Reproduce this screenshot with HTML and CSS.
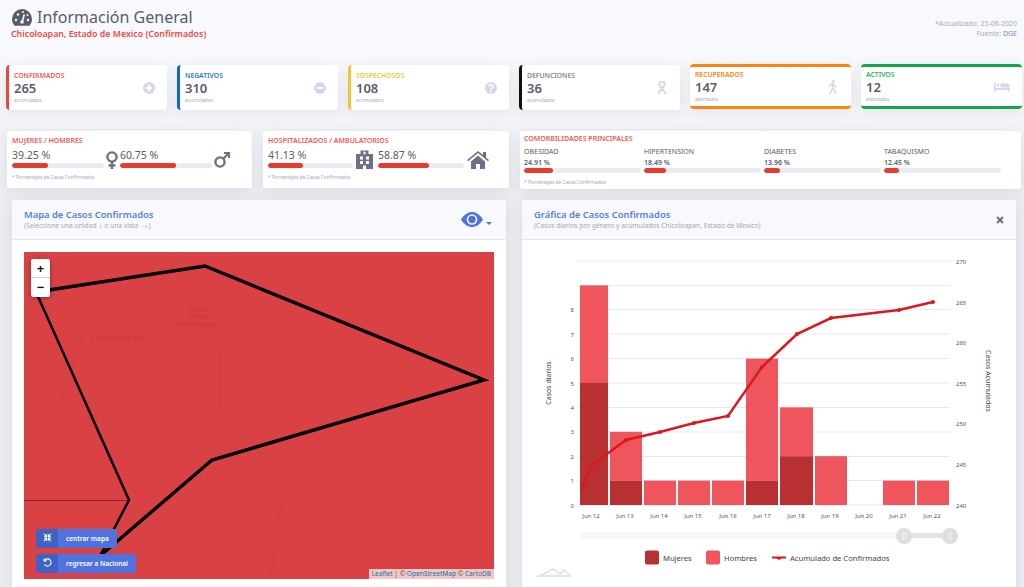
FILE: index.html
```html
<!DOCTYPE html>
<html lang="es">
<head>
    <meta charset="UTF-8">
    <title>Información General</title>
    <link rel="stylesheet" href="styles.css">
</head>
<body>
    <header class="top">
        <div>
            <h1 class="top-title">
                <svg class="gauge" viewBox="0 0 20 17"><path d="M10 0a10 10 0 0 0-10 10c0 2.700 1 5 2.600 6.700h14.800c1.600-1.700 2.600-4 2.600-6.700a10 10 0 0 0-10-10z" fill="#5a5c69"/><path d="M10.300 12.500l2-7" stroke="#f8f9fc" stroke-width="1.600"/><g fill="#f8f9fc"><circle cx="10" cy="13" r="1.800"/><circle cx="4" cy="11" r="1.200"/><circle cx="6" cy="5.500" r="1.200"/><circle cx="11" cy="3" r="1"/><circle cx="16" cy="11" r="1.200"/><circle cx="15.500" cy="6" r="1"/></g></svg>
                Información General
            </h1>
            <div class="top-sub">Chicoloapan, Estado de Mexico (Confirmados)</div>
        </div>
        <div class="top-note">
            <div>*Actualizado: 25-06-2020</div>
            <div>Fuente: <a class="link">DGE</a></div>
        </div>
    </header>

    <section class="kpi-row">
        <div class="kpi kpi-red">
            <div><div class="kpi-label">Confirmados</div><div class="kpi-num">265</div><div class="kpi-note">acumulados</div></div>
            <svg class="kpi-icon" viewBox="0 0 12 12"><circle cx="6" cy="6" r="6" fill="#d5d8e6"/><path d="M6 2.800v6.400M2.800 6h6.400" stroke="#fff" stroke-width="2"/></svg>
        </div>
        <div class="kpi kpi-blue">
            <div><div class="kpi-label">Negativos</div><div class="kpi-num">310</div><div class="kpi-note">acumulados</div></div>
            <svg class="kpi-icon" viewBox="0 0 12 12"><circle cx="6" cy="6" r="6" fill="#d5d8e6"/><path d="M2.800 6h6.400" stroke="#fff" stroke-width="2"/></svg>
        </div>
        <div class="kpi kpi-yellow">
            <div><div class="kpi-label">Sospechosos</div><div class="kpi-num">108</div><div class="kpi-note">acumulados</div></div>
            <svg class="kpi-icon" viewBox="0 0 12 12"><circle cx="6" cy="6" r="6" fill="#d5d8e6"/><path d="M4 4.600c0-2.600 4-2.600 4 0 0 1.500-2 1.400-2 2.900" fill="none" stroke="#fff" stroke-width="1.500"/><circle cx="6" cy="9.400" r="1" fill="#fff"/></svg>
        </div>
        <div class="kpi kpi-black">
            <div><div class="kpi-label">Defunciones</div><div class="kpi-num">36</div><div class="kpi-note">acumulados</div></div>
            <svg class="kpi-icon kpi-icon-tall" viewBox="0 0 12 14"><path d="M6 .8C4.200 .8 3.300 1.800 3.300 3.200c0 2 3.700 5 6.700 9.800M6 .8C7.800 .8 8.700 1.800 8.700 3.200c0 2-3.700 5-6.700 9.800" fill="none" stroke="#d5d8e6" stroke-width="2"/></svg>
        </div>
        <div class="kpi kpi-orange">
            <div><div class="kpi-label">Recuperados</div><div class="kpi-num">147</div><div class="kpi-note">estimados</div></div>
            <svg class="kpi-icon kpi-icon-tall" viewBox="0 0 10 14"><circle cx="5.200" cy="1.500" r="1.500" fill="#d5d8e6"/><path d="M5 3.800L4.500 8 6.800 10.500 7.500 14M4.500 8L3.500 11 1.500 14M1.500 7l1-3 2.500-.3 1.500 2.500 2 .8" fill="none" stroke="#d5d8e6" stroke-width="1.500"/></svg>
        </div>
        <div class="kpi kpi-green">
            <div><div class="kpi-label">Activos</div><div class="kpi-num">12</div><div class="kpi-note">estimados</div></div>
            <svg class="kpi-icon kpi-icon-wide" viewBox="0 0 16 10"><path d="M0 0h1.400v6H16v4h-1.400V8H1.400v2H0z" fill="#d5d8e6"/><circle cx="4" cy="3" r="1.500" fill="#d5d8e6"/><path d="M6.500 1.500h7a2 2 0 0 1 2 2V5.400h-9z" fill="#d5d8e6"/></svg>
        </div>
    </section>

    <section class="stat-row">
        <div class="stat">
            <div class="stat-label">Mujeres / Hombres</div>
            <div class="split">
                <div class="split-item"><div class="stat-val">39.25 %</div><div class="bar"><div class="bar-fill" style="width: 39.25%"></div></div></div>
                <svg class="split-icon" width="12" height="18" viewBox="0 0 12 18"><circle cx="6" cy="6" r="4.600" fill="none" stroke="#6e7185" stroke-width="2.400"/><path d="M6 10v8M2.500 14.500h7" stroke="#6e7185" stroke-width="2.400"/></svg>
                <div class="split-item"><div class="stat-val">60.75 %</div><div class="bar"><div class="bar-fill" style="width: 60.75%"></div></div></div>
                <svg class="split-icon male" width="16" height="16" viewBox="0 0 16 16"><circle cx="6" cy="10" r="4.600" fill="none" stroke="#6e7185" stroke-width="2.400"/><path d="M9.500 6.500L15 1M10 1h5v5" fill="none" stroke="#6e7185" stroke-width="2.200"/></svg>
            </div>
            <div class="stat-note">* Porcentajes de Casos Confirmados</div>
        </div>
        <div class="stat">
            <div class="stat-label">Hospitalizados / Ambulatorios</div>
            <div class="split">
                <div class="split-item item-hosp"><div class="stat-val">41.13 %</div><div class="bar"><div class="bar-fill" style="width: 41.13%"></div></div></div>
                <svg class="split-icon hosp" width="17" height="20" viewBox="0 0 17 20"><path d="M0 5h4.500V1.500h8V5H17v15H0z" fill="#6e7185"/><path d="M8.500 2.500v3M7 4h3" stroke="#fff"/><g fill="#fff"><rect x="4" y="7.500" width="3" height="3"/><rect x="10" y="7.500" width="3" height="3"/><rect x="4" y="12" width="3" height="3"/><rect x="10" y="12" width="3" height="3"/><rect x="7" y="16.500" width="3" height="3.500"/></g></svg>
                <div class="split-item item-amb"><div class="stat-val">58.87 %</div><div class="bar"><div class="bar-fill" style="width: 58.87%"></div></div></div>
                <svg class="split-icon house" width="22" height="18" viewBox="0 0 22 18"><path d="M0 9L11 0l5 4V1h3v5.500L22 9l-1 1.200L11 2 1 10.200z" fill="#6e7185"/><path d="M4 10.500L11 4.500l7 6V18h-5v-5H9v5H4z" fill="#6e7185"/></svg>
            </div>
            <div class="stat-note">* Porcentajes de Casos Confirmados</div>
        </div>
        <div class="stat stat-wide">
            <div class="stat-label">Comorbilidades Principales</div>
            <div class="como">
                <div><div class="como-name">OBESIDAD</div><div class="como-val">24.91 %</div><div class="bar"><div class="bar-fill" style="width: 24.91%"></div></div></div>
                <div><div class="como-name">HIPERTENSION</div><div class="como-val">18.49 %</div><div class="bar"><div class="bar-fill" style="width: 18.49%"></div></div></div>
                <div><div class="como-name">DIABETES</div><div class="como-val">13.96 %</div><div class="bar"><div class="bar-fill" style="width: 13.96%"></div></div></div>
                <div><div class="como-name">TABAQUISMO</div><div class="como-val">12.45 %</div><div class="bar"><div class="bar-fill" style="width: 12.45%"></div></div></div>
            </div>
            <div class="stat-note">* Porcentajes de Casos Confirmados</div>
        </div>
    </section>

    <section class="panels">
        <div class="panel">
            <div class="panel-head">
                <div>
                    <div class="panel-title">Mapa de Casos Confirmados</div>
                    <div class="panel-sub">(Seleccione una unidad <span class="arrow">↓</span> o una vista <span class="arrow">→</span>)</div>
                </div>
                <div class="view-btn">
                    <svg width="22" height="15" viewBox="0 0 22 15"><path d="M0 7.500C3 2.500 7 0 11 0s8 2.500 11 7.500C19 12.500 15 15 11 15S3 12.500 0 7.500z" fill="#4e73df"/><circle cx="11" cy="7.500" r="5.300" fill="#f8f9fc"/><circle cx="11" cy="7.500" r="3.700" fill="#4e73df"/></svg>
                    <span class="caret"></span>
                </div>
            </div>
            <div class="panel-body">
                <div class="map">
                    <svg class="map-lines" width="470" height="327" viewBox="24 252 470 327">
                        <g fill="none" stroke="#cf3b40" stroke-width="1" opacity=".5">
                            <path d="M110 287L84 330 62 400"/><path d="M285 480L270 579"/><path d="M190 300l30 50 0 60"/>
                        </g>
                        <g class="map-labels">
                            <text x="197" y="312" text-anchor="middle">Santa</text>
                            <text x="197" y="319" text-anchor="middle">Sabina</text>
                            <text x="197" y="327" text-anchor="middle">Chimalhuacán</text>
                            <text class="map-town" x="117" y="341" text-anchor="middle">Chicoloapan</text>
                        </g>
                        <path d="M24 500.500H129" stroke="#8c2226" stroke-width="1"/>
                        <path d="M36 292L129 500 100 556" fill="none" stroke="#000" stroke-width="2.500"/>
                        <path d="M36 292L205 266 484 380 212 460 100 556" fill="none" stroke="#000" stroke-width="3.500"/>
                    </svg>
                    <div class="zoom-ctl"><div class="zoom-btn zoom-plus">+</div><div class="zoom-btn">−</div></div>
                    <div class="map-btns">
                        <div class="map-btn">
                            <span class="map-btn-ico"><svg width="9" height="9" viewBox="0 0 10 10"><path d="M1 1l3 3M9 1L6 4M1 9l3-3M9 9L6 6M4 1.500V4H1.500M6 1.500V4h2.500M4 8.500V6H1.500M6 8.500V6h2.500" fill="none" stroke="#fff" stroke-width="1.200"/></svg></span>
                            <span class="map-btn-txt">centrar mapa</span>
                        </div>
                        <div class="map-btn">
                            <span class="map-btn-ico"><svg width="9" height="9" viewBox="0 0 10 10"><path d="M2 2.300A4 4 0 1 1 1.500 7M1.200.5v2.700h2.700" fill="none" stroke="#fff" stroke-width="1.200"/></svg></span>
                            <span class="map-btn-txt">regresar a Nacional</span>
                        </div>
                    </div>
                    <div class="attrib"><a>Leaflet</a> | © <a>OpenStreetMap</a> © <a>CartoDB</a></div>
                </div>
            </div>
        </div>

        <div class="panel">
            <div class="panel-head">
                <div>
                    <div class="panel-title">Gráfica de Casos Confirmados</div>
                    <div class="panel-sub">(Casos diarios por género y acumulados Chicoloapan, Estado de Mexico)</div>
                </div>
                <svg class="close-x" width="8" height="8" viewBox="0 0 8 8"><path d="M1 1l6 6M7 1L1 7" stroke="#6e7185" stroke-width="2"/></svg>
            </div>
            <div class="panel-body">
                <svg class="chart" width="494" height="347" viewBox="522 240 494 347">
                    <g stroke="#e8e9ee" stroke-width="1">
                        <path d="M578 261H950M578 285.500H950M578 309.500H950M578 334H950M578 358.500H950M578 383H950M578 407.500H950M578 432H950M578 456.500H950M578 480.500H950M578 505H950"/>
                    </g>
                    <g fill="#ee555c">
                        <rect x="580" y="285.400" width="28" height="97.600"/>
                        <rect x="610" y="431.800" width="32" height="48.800"/>
                        <rect x="644" y="480.600" width="32" height="24.400"/>
                        <rect x="678" y="480.600" width="32" height="24.400"/>
                        <rect x="712" y="480.600" width="32" height="24.400"/>
                        <rect x="746" y="358.600" width="32" height="122"/>
                        <rect x="780" y="407.400" width="33" height="48.800"/>
                        <rect x="815" y="456.200" width="32" height="48.800"/>
                        <rect x="883" y="480.600" width="32" height="24.400"/>
                        <rect x="917" y="480.600" width="32" height="24.400"/>
                    </g>
                    <g fill="#b93032">
                        <rect x="580" y="383" width="28" height="122"/>
                        <rect x="610" y="480.600" width="32" height="24.400"/>
                        <rect x="746" y="480.600" width="32" height="24.400"/>
                        <rect x="780" y="456.200" width="33" height="48.800"/>
                    </g>
                    <path d="M581 489L592 465 626 440 660 432 694 423 728 416 762 367 797 334 831 318 899 310 933 302" fill="none" stroke="#d71920" stroke-width="2.500"/>
                    <g fill="#d71920">
                        <circle cx="592" cy="465" r="2"/><circle cx="626" cy="440" r="2"/><circle cx="660" cy="432" r="2"/><circle cx="694" cy="423" r="2"/><circle cx="728" cy="416" r="2"/><circle cx="762" cy="367" r="2"/><circle cx="797" cy="334" r="2"/><circle cx="831" cy="318" r="2"/><circle cx="899" cy="310" r="2"/><circle cx="933" cy="302" r="2"/>
                    </g>
                    <g class="tick" text-anchor="end">
                        <text x="574" y="507.500">0</text><text x="574" y="483">1</text><text x="574" y="458.500">2</text><text x="574" y="434">3</text><text x="574" y="410">4</text><text x="574" y="385.500">5</text><text x="574" y="361">6</text><text x="574" y="336.500">7</text><text x="574" y="312">8</text>
                    </g>
                    <g class="tick">
                        <text x="956" y="507.500">240</text><text x="956" y="467">245</text><text x="956" y="426">250</text><text x="956" y="385.500">255</text><text x="956" y="345">260</text><text x="956" y="304.500">265</text><text x="956" y="263.500">270</text>
                    </g>
                    <g class="tick" text-anchor="middle">
                        <text x="591" y="518">Jun 12</text><text x="625" y="518">Jun 13</text><text x="659" y="518">Jun 14</text><text x="693" y="518">Jun 15</text><text x="728" y="518">Jun 16</text><text x="762" y="518">Jun 17</text><text x="796" y="518">Jun 18</text><text x="830" y="518">Jun 19</text><text x="864" y="518">Jun 20</text><text x="898" y="518">Jun 21</text><text x="932" y="518">Jun 22</text>
                    </g>
                    <text class="axis-title" transform="translate(551 383) rotate(-90)" text-anchor="middle">Casos diarios</text>
                    <text class="axis-title" transform="translate(986 381) rotate(90)" text-anchor="middle">Casos Acumulados</text>
                    <rect x="580" y="532" width="324" height="7" fill="#f7f7f9"/>
                    <rect x="904" y="533" width="46" height="5" fill="#e3e3e6"/>
                    <circle cx="904" cy="536" r="8" fill="#dededf"/>
                    <circle cx="950" cy="536" r="8" fill="#dededf"/>
                    <path d="M903 532v8M905.500 532v8M949 532v8M951.500 532v8" stroke="#f3f3f4" stroke-width="1"/>
                    <rect x="645" y="550.500" width="14" height="14" rx="2" fill="#b93032"/>
                    <text class="legend" x="663" y="560.500">Mujeres</text>
                    <rect x="706" y="550.500" width="14" height="14" rx="2" fill="#ee555c"/>
                    <text class="legend" x="724" y="560.500">Hombres</text>
                    <path d="M772 557.500H786" stroke="#d71920" stroke-width="2"/>
                    <path d="M776 558h6l-3 2z" fill="#d71920"/>
                    <text class="legend" x="790" y="560.500">Acumulado de Confirmados</text>
                    <path d="M537 576h34M541 575l7-3 4-3 3 1 5 4 4-4 3 2 3 3" fill="none" stroke="#bdbdc2" stroke-width=".8"/>
                </svg>
            </div>
        </div>
    </section>
</body>
</html>
```

FILE: styles.css
```css
html, body {
    margin: 0;
    height: 587px;
    overflow: hidden;
}
body {
    font-family: 'Noto Sans', 'Open Sans', sans-serif;
    background: linear-gradient(#f8f9fc 0, #f8f9fc 70px, #eceef4 190px);
    color: #5a5c69;
}

/* encabezado */
.top {
    display: flex;
    justify-content: space-between;
    height: 64px;
    box-sizing: border-box;
    padding: 7px 7px 0 11px;
}
.top-title {
    display: flex;
    align-items: center;
    gap: 5px;
    margin: 0;
    font-size: 16px;
    font-weight: 400;
    line-height: 21px;
}
.gauge {
    width: 20px;
    height: 17px;
    margin-left: 1px;
}
.top-sub {
    font-size: 8.800px;
    font-weight: 600;
    line-height: 13px;
    color: #f04a44;
}
.top-note {
    padding-top: 12px;
    font-size: 7px;
    line-height: 10px;
    text-align: right;
    color: #a9abbb;
}
.link {
    color: #6c8ae4;
}

/* tarjetas de totales */
.kpi-row {
    display: grid;
    grid-template-columns: repeat(6, 161px);
    gap: 10px;
    padding-left: 6px;
    height: 46px;
    margin-top: 1px;
}
.kpi {
    display: flex;
    justify-content: space-between;
    align-items: center;
    box-sizing: border-box;
    height: 45px;
    padding: 0 12px 0 5px;
    background: #fff;
    border-radius: 4px;
    box-shadow: 0 2px 14px rgba(58, 59, 69, .1);
}
.kpi-label {
    font-size: 6.800px;
    font-weight: 600;
    line-height: 9px;
    text-transform: uppercase;
}
.kpi-num {
    font-size: 13px;
    font-weight: 600;
    line-height: 16px;
}
.kpi-note {
    padding-top: 1px;
    font-size: 4.800px;
    line-height: 7px;
    color: #a5a7b5;
}
.kpi-icon {
    width: 12px;
    height: 12px;
}
.kpi-icon-tall {
    width: 12px;
    height: 14px;
}
.kpi-icon-wide {
    width: 16px;
    height: 10px;
}
.kpi-red { border-left: 3px solid #e74a3b; }
.kpi-red .kpi-label { color: #f05a52; }
.kpi-blue { border-left: 3px solid #1565c9; }
.kpi-blue .kpi-label { color: #2f76d2; }
.kpi-yellow { border-left: 3px solid #f6c23e; }
.kpi-yellow .kpi-label { color: #f6c23e; }
.kpi-black { border-left: 3px solid #111; }
.kpi-black .kpi-label { color: #858796; }
.kpi-orange, .kpi-green {
    padding-left: 5px;
    margin-top: -1px;
}
.kpi-orange {
    border-top: 3px solid #f98512;
    border-bottom: 3px solid #f98512;
}
.kpi-orange .kpi-label { color: #f98512; }
.kpi-green {
    border-top: 3px solid #12a54a;
    border-bottom: 3px solid #12a54a;
}
.kpi-green .kpi-label { color: #1fb956; }

/* porcentajes */
.stat-row {
    display: grid;
    grid-template-columns: 245px 246px 501px;
    gap: 11px;
    padding-left: 7px;
    margin-top: 20px;
}
.stat {
    box-sizing: border-box;
    height: 57px;
    padding: 5px 5px 0;
    background: #fff;
    border-radius: 3px;
    box-shadow: 0 2px 14px rgba(58, 59, 69, .1);
}
.stat-wide {
    height: 58px;
    padding: 3px 4px 0;
}
.stat-label {
    font-size: 7px;
    font-weight: 600;
    line-height: 9px;
    text-transform: uppercase;
    color: #f05a52;
}
.split {
    display: flex;
    align-items: flex-end;
    height: 24px;
}
.split-item {
    width: 92px;
}
.item-hosp {
    width: 85px;
}
.item-amb {
    width: 86px;
}
.stat-val {
    font-size: 10.500px;
    line-height: 15px;
}
.bar {
    height: 5px;
    background: #e9ebf2;
    border-radius: 3px;
    overflow: hidden;
    margin-bottom: 1px;
}
.bar-fill {
    height: 100%;
    background: #e53c2e;
    border-radius: 3px;
}
.split-icon {
    margin: 0 2px;
}
.hosp {
    margin: 0 5px 0 3px;
}
.house {
    margin: 0 0 0 3px;
}
.male {
    margin-bottom: 1px;
}
.stat-note {
    margin-top: 5px;
    font-size: 4.800px;
    line-height: 7px;
    color: #a5a7b5;
}
.como {
    display: grid;
    grid-template-columns: repeat(4, 117px);
    gap: 3px;
    margin-top: 4px;
}
.como-name {
    font-size: 7px;
    line-height: 10px;
}
.como-val {
    font-size: 7px;
    font-weight: 600;
    line-height: 11px;
}
.stat-wide .stat-note {
    margin-top: 5px;
}

/* paneles */
.panels {
    display: grid;
    grid-template-columns: 494px 494px;
    gap: 16px;
    padding-left: 12px;
    margin-top: 11px;
}
.panel {
    background: #fff;
    box-shadow: 0 2px 14px rgba(58, 59, 69, .1);
}
.panel-head {
    display: flex;
    justify-content: space-between;
    align-items: center;
    box-sizing: border-box;
    height: 40px;
    padding: 0 12px;
    background: #f8f9fc;
    border-bottom: 1px solid #e3e6f0;
}
.panel-title {
    font-size: 9.400px;
    font-weight: 600;
    line-height: 12px;
    color: #5b7de3;
}
.panel-sub {
    font-size: 6.700px;
    line-height: 9px;
    color: #a5a7b5;
}
.arrow {
    font-size: 8.500px;
    line-height: 8px;
}
.view-btn {
    display: flex;
    align-items: flex-end;
    gap: 3px;
    padding-right: 2px;
}
.caret {
    width: 0;
    height: 0;
    margin-bottom: 2px;
    border: 3px solid transparent;
    border-top-color: #4e73df;
    border-bottom: 0;
}
.panel-body {
    height: 347px;
}

/* mapa */
.map {
    position: relative;
    width: 470px;
    height: 327px;
    margin: 12px;
    overflow: hidden;
    background: #da4145;
}
.map-lines {
    display: block;
}
.map-labels {
    font-size: 6.500px;
    fill: #c73a3f;
}
.map-town {
    font-size: 9px;
}
.zoom-ctl {
    position: absolute;
    left: 7px;
    top: 7px;
    width: 19px;
    background: #fff;
    border-radius: 2px;
    box-shadow: 0 1px 4px rgba(0, 0, 0, .4);
}
.zoom-btn {
    height: 19px;
    font-size: 13px;
    font-weight: 700;
    line-height: 19px;
    text-align: center;
    color: #111;
}
.zoom-plus {
    border-bottom: 1px solid #ccc;
    box-sizing: border-box;
}
.map-btns {
    position: absolute;
    left: 12px;
    bottom: 6px;
    display: flex;
    flex-direction: column;
    align-items: flex-start;
    gap: 6px;
}
.map-btn {
    display: flex;
    height: 19px;
    background: #4e73df;
    border-radius: 3px;
    overflow: hidden;
    color: #fff;
}
.map-btn-ico {
    display: flex;
    align-items: center;
    justify-content: center;
    box-sizing: border-box;
    width: 22px;
    padding-bottom: 2px;
    background: #3f62c7;
}
.map-btn-txt {
    padding: 0 8px 0 8px;
    font-size: 6.500px;
    font-weight: 600;
    line-height: 19px;
}
.attrib {
    position: absolute;
    right: 0;
    bottom: 0;
    padding: 0 3px;
    font-size: 6.600px;
    line-height: 10px;
    color: #555;
    background: rgba(255, 255, 255, .7);
}
.attrib a {
    color: #0078a8;
}

/* grafica */
.chart {
    display: block;
}
.tick {
    font-size: 6px;
    fill: #555;
}
.axis-title {
    font-size: 7px;
    fill: #444;
}
.legend {
    font-size: 7.600px;
    fill: #444;
}
```
